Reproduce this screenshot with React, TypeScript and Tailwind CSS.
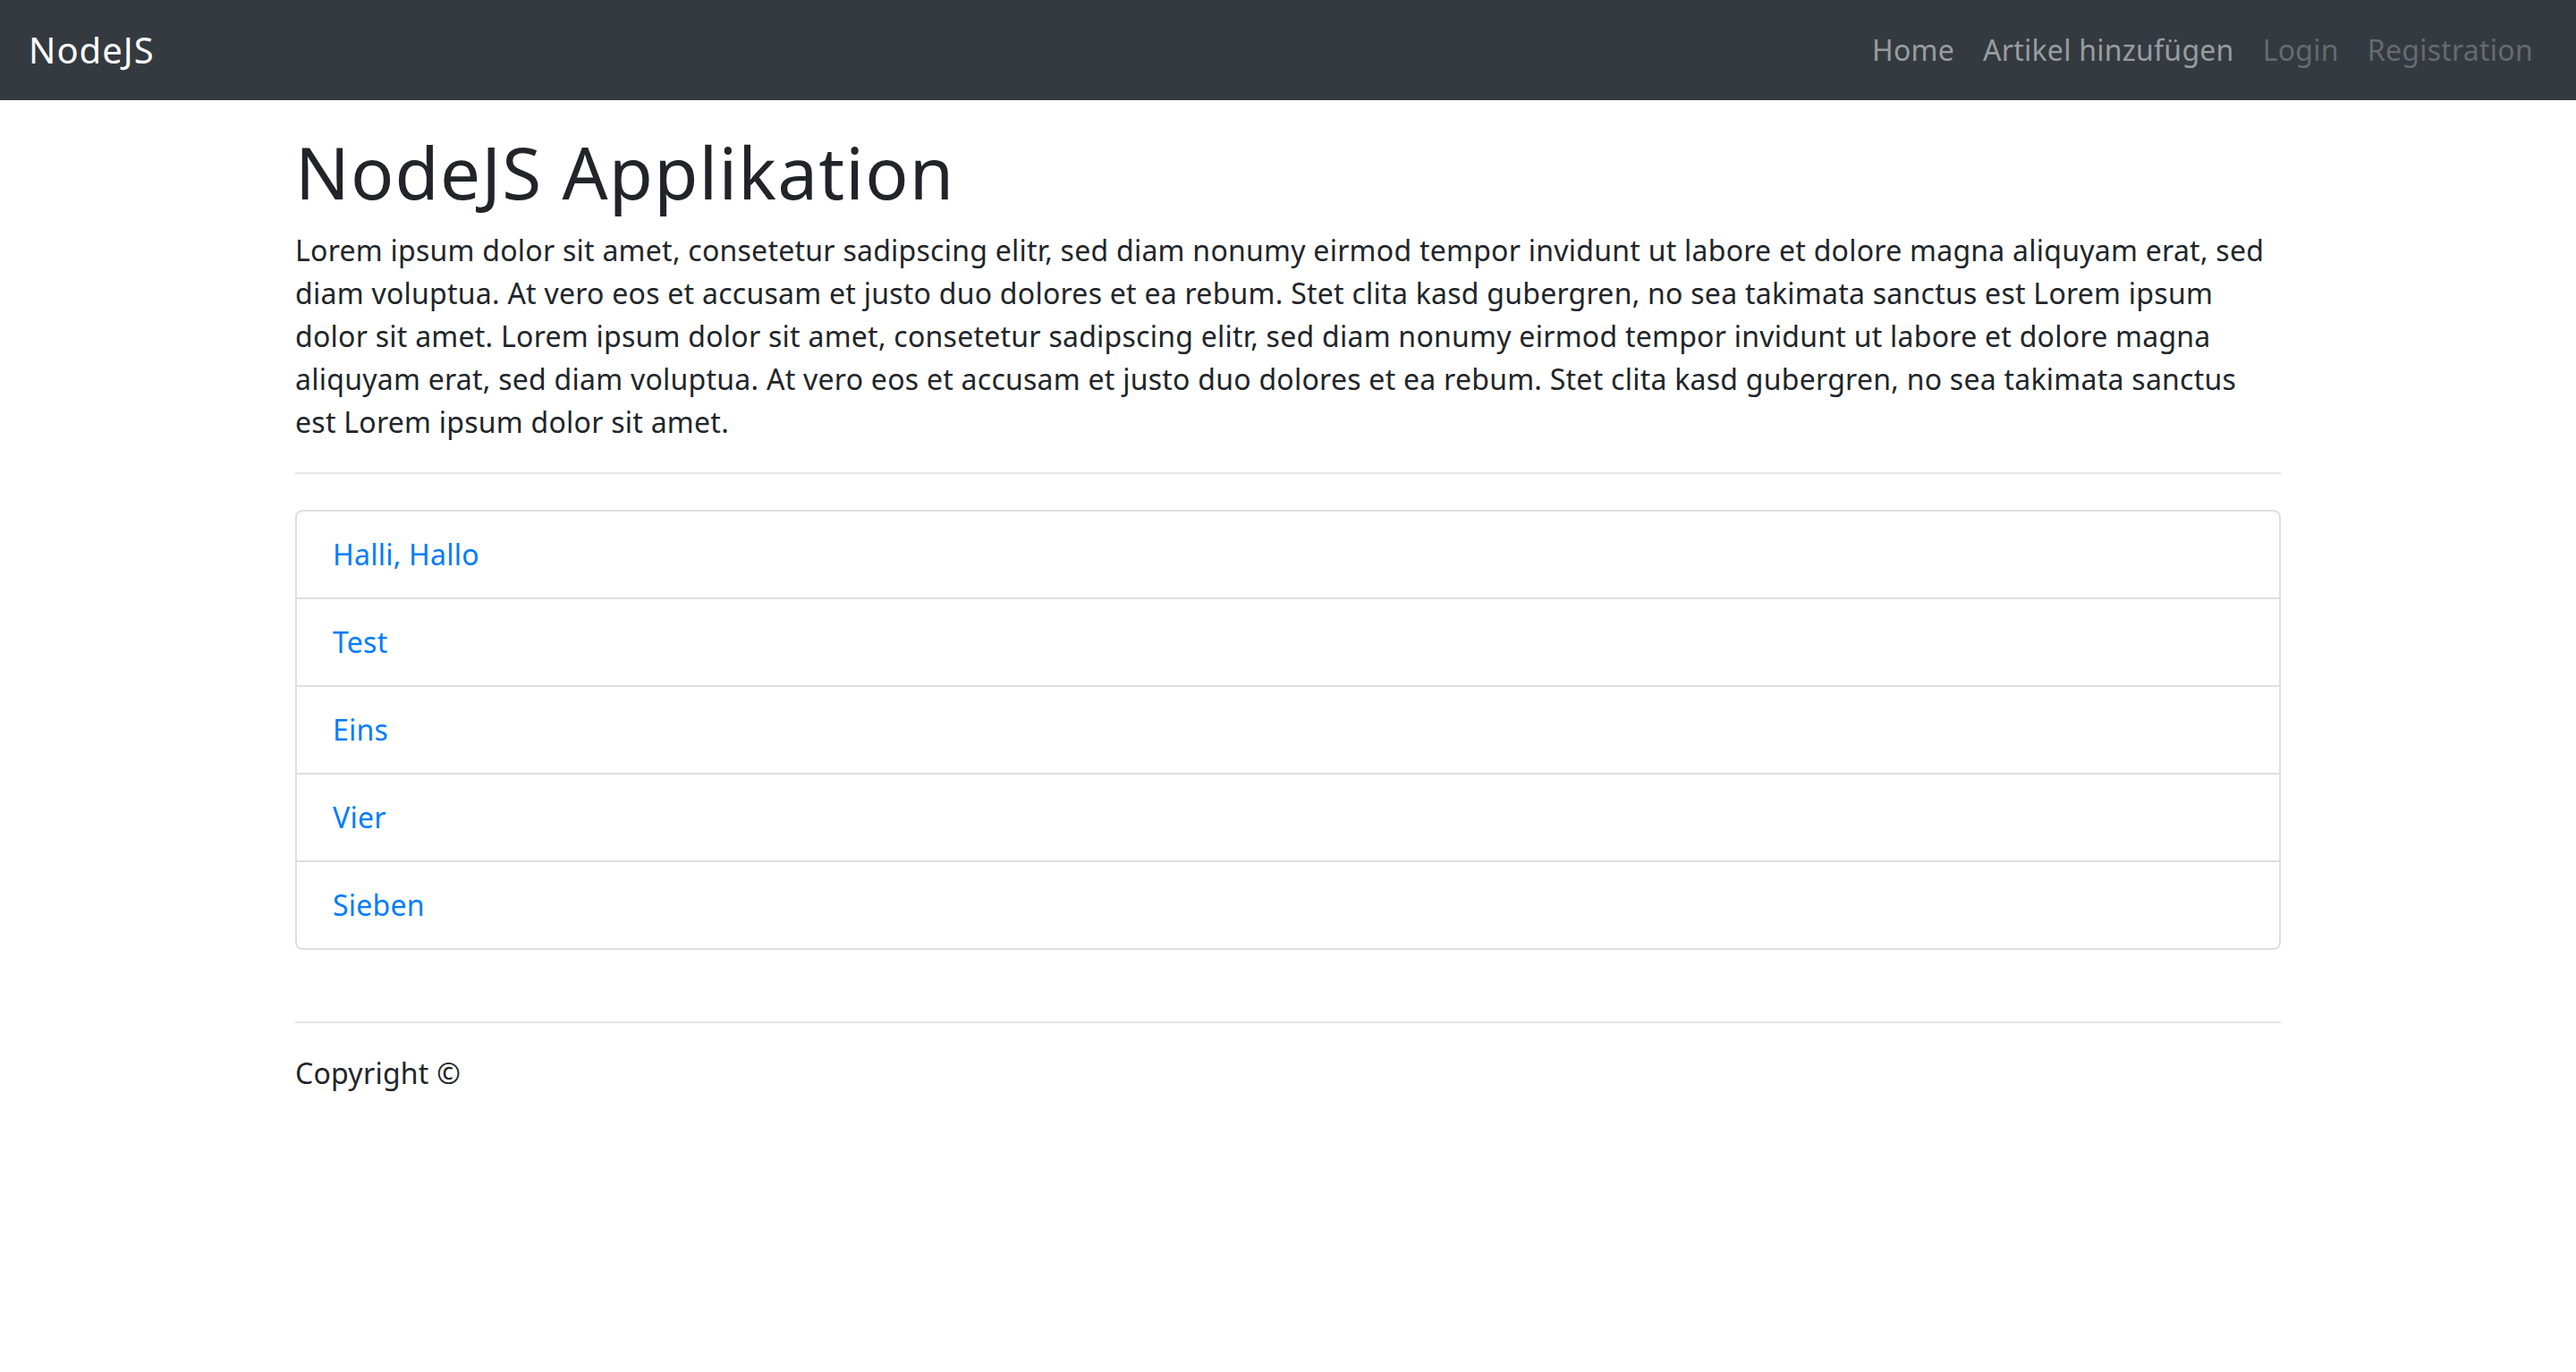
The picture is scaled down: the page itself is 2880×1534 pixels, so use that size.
const articles = ['Halli, Hallo', 'Test', 'Eins', 'Vier', 'Sieben']

export default function App() {
  return (
    <div className="min-h-screen bg-white text-[#212529] tracking-[0.25px]" style={{ fontFamily: '"Noto Sans", "Open Sans", sans-serif' }}>
      {/* Navbar */}
      <nav className="h-[112px] bg-[#343a40] flex items-center justify-between px-[32px]">
        <a href="#" className="text-[40px] leading-[60px] py-[10px] text-white tracking-[1px]">NodeJS</a>
        <ul className="flex items-center">
          <NavLink label="Home" />
          <NavLink label="Artikel hinzufügen" />
          <NavLink label="Login" muted />
          <NavLink label="Registration" muted />
        </ul>
      </nav>

      <div className="w-[2280px] mx-auto px-[30px]">
        <h1 className="mt-[32px] mb-[16px] text-[80px] leading-[96px] font-normal tracking-[1.2px]">NodeJS Applikation</h1>
        <p className="text-[32px] leading-[48px]">
          Lorem ipsum dolor sit amet, consetetur sadipscing elitr, sed diam nonumy eirmod tempor invidunt ut labore et
          dolore magna aliquyam erat, sed diam voluptua. At vero eos et accusam et justo duo dolores et ea rebum. Stet
          clita kasd gubergren, no sea takimata sanctus est Lorem ipsum dolor sit amet. Lorem ipsum dolor sit amet,
          consetetur sadipscing elitr, sed diam nonumy eirmod tempor invidunt ut labore et dolore magna aliquyam erat,
          sed diam voluptua. At vero eos et accusam et justo duo dolores et ea rebum. Stet clita kasd gubergren, no sea
          takimata sanctus est Lorem ipsum dolor sit amet.
        </p>
        <hr className="mt-[32px] border-t-2 border-[#e5e5e5]" />

        {/* Article list */}
        <ul className="mt-[40px] border-2 border-[#dfdfdf] rounded-[8px]">
          {articles.map((title, i) => (
            <li
              key={title}
              className={'px-[40px] py-[24px] text-[32px] leading-[48px]' + (i > 0 ? ' border-t-2 border-[#dfdfdf]' : '')}
            >
              <a href="#" className="text-[#007bff]">{title}</a>
            </li>
          ))}
        </ul>

        <footer className="mt-[80px]">
          <hr className="border-t-2 border-[#e5e5e5]" />
          <p className="mt-[32px] text-[32px] leading-[48px]">Copyright &copy;</p>
        </footer>
      </div>
    </div>
  )
}

function NavLink({ label, muted }: { label: string; muted?: boolean }) {
  return (
    <li>
      <a
        href="#"
        className={'block px-[16px] py-[16px] text-[32px] leading-[48px] ' + (muted ? 'text-white/25' : 'text-white/50')}
      >
        {label}
      </a>
    </li>
  )
}
